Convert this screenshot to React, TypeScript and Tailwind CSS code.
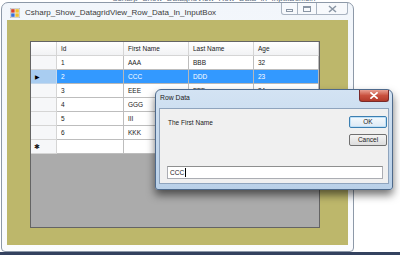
import React from "react";

const cols = [
    { name: "Id", w: 67 },
    { name: "First Name", w: 65 },
    { name: "Last Name", w: 65 },
    { name: "Age", w: 65 },
];

// last name / age of rows 4-6 sit under the dialog, left blank
const rows = [
    ["1", "AAA", "BBB", "32"],
    ["2", "CCC", "DDD", "23"],
    ["3", "EEE", "FFF", "34"],
    ["4", "GGG", "", ""],
    ["5", "III", "", ""],
    ["6", "KKK", "", ""],
];

const AppIcon = () => (
    <svg width="10" height="10" viewBox="0 0 10 10">
        <rect x="0" y="0" width="10" height="10" fill="#e8e8e8" stroke="#9a9a9a" strokeWidth="0.6" />
        <rect x="1.2" y="1.2" width="3.4" height="3.4" fill="#d9412b" />
        <rect x="5.4" y="1.2" width="3.4" height="3.4" fill="#f2c029" />
        <rect x="1.2" y="5.4" width="3.4" height="3.4" fill="#3a6fd8" />
        <rect x="5.4" y="5.4" width="3.4" height="3.4" fill="#f2c029" />
    </svg>
);

const DataGrid = () => {
    return (
        <div className="w-[290px] h-[187px] border border-[#646464] bg-[#ababab] flex flex-col text-[6.5px] text-[#1a1a1a]">
            {/* header row */}
            <div className="flex h-[14px] bg-gradient-to-b from-[#ffffff] to-[#f1f2f4] border-b border-[#d5d5d5]">
                <div className="w-[26px] border-r border-[#d5d5d5]" />
                {cols.map((c) => (
                    <div
                        key={c.name}
                        style={{ width: c.w }}
                        className="border-r border-[#d5d5d5] pl-[4px] flex items-center"
                    >
                        {c.name}
                    </div>
                ))}
            </div>

            {rows.map((r, i) => {
                const sel = i === 1;
                return (
                    <div key={r[0]} className="flex h-[14px]">
                        <div
                            className={
                                sel
                                    ? "w-[26px] bg-[#a9cdf1] border-r border-b border-[#c5d8ec] flex items-center pl-[4px]"
                                    : "w-[26px] bg-[#f6f7f9] border-r border-b border-[#d5d5d5]"
                            }
                        >
                            {sel && <span className="text-[6px] leading-none text-black">▶</span>}
                        </div>
                        {r.map((v, j) => (
                            <div
                                key={j}
                                style={{ width: cols[j].w }}
                                className={
                                    sel
                                        ? "bg-[#3399ff] text-white border-r border-b border-[#b8b8b8] pl-[4px] flex items-center"
                                        : "bg-white border-r border-b border-[#bdbdbd] pl-[4px] flex items-center"
                                }
                            >
                                {v}
                            </div>
                        ))}
                    </div>
                );
            })}

            {/* new row */}
            <div className="flex h-[14px]">
                <div className="w-[26px] bg-[#f6f7f9] border-r border-b border-[#d5d5d5] flex items-center pl-[3px]">
                    <span className="text-[7px] leading-none">✱</span>
                </div>
                {cols.map((c) => (
                    <div key={c.name} style={{ width: c.w }} className="bg-white border-r border-b border-[#bdbdbd]" />
                ))}
            </div>
        </div>
    );
};

const RowDataDialog = () => {
    return (
        <div className="absolute left-[155px] top-[89px] w-[238px] h-[101px] rounded-t-[6px] rounded-b-[3px] border border-[#4e6a8c] bg-gradient-to-b from-[#d3e3f3] to-[#b9d0e8] shadow-[0_5px_9px_rgba(0,0,0,0.55)] flex flex-col">
            <div className="h-[18px] flex items-start">
                <span className="pl-[4px] pt-[5px] text-[6.8px] leading-none text-[#1b1b1b]">Row Data</span>
                <div className="ml-auto mr-[3px] w-[30px] h-[12px] rounded-b-[3px] border border-[#7a2a2a] border-t-0 bg-gradient-to-b from-[#e8a093] via-[#c9513f] to-[#b23a2a] flex items-center justify-center">
                    <svg width="8" height="7" viewBox="0 0 8 7">
                        <path d="M1 0.8 L7 6.2 M7 0.8 L1 6.2" stroke="#ffffff" strokeWidth="1.8" strokeLinecap="round" />
                    </svg>
                </div>
            </div>
            <div className="mx-[3px] h-[76px] bg-[#f0f0f0] border border-[#8fa4bd] flex flex-col">
                <div className="flex pt-[7px]">
                    <span className="pl-[8px] pt-[4px] text-[6.5px] leading-none text-[#1a1a1a]">The First Name</span>
                    <div className="ml-auto mr-[1px] flex flex-col gap-[6px]">
                        <div className="w-[38px] h-[12px] rounded-[2px] border border-[#3c7fb1] bg-gradient-to-b from-[#f6fafd] to-[#dce9f5] shadow-[inset_0_0_0_1px_#bfe0f7] flex items-center justify-center text-[6.5px] text-[#1a1a1a]">
                            OK
                        </div>
                        <div className="w-[38px] h-[12px] rounded-[2px] border border-[#707070] bg-gradient-to-b from-[#f4f4f4] to-[#dddddd] flex items-center justify-center text-[6.5px] text-[#1a1a1a]">
                            Cancel
                        </div>
                    </div>
                </div>
                <div className="mt-auto mb-[4px] ml-[7px] mr-[5px] h-[13px] bg-white border border-[#abadb3] border-t-[#8e8f8f] flex items-center pl-[2px] text-[6.5px] text-[#1a1a1a]">
                    CCC<span className="w-[1px] h-[9px] bg-black ml-[1px]" />
                </div>
            </div>
        </div>
    );
};

const App = () => {
    return (
        <div className="relative w-[400px] h-[255px] overflow-hidden bg-white font-['Liberation_Sans',Arial,sans-serif]">
            {/* window behind, just peeking out at the top */}
            <div className="absolute left-[112px] top-[-5px] text-[8px] leading-[8px] text-[#5b6b80] whitespace-nowrap">
                Csharp_Show_DatagridView_Row_Data_In_InputBox.sln
            </div>

            {/* main form */}
            <div className="absolute left-[1px] top-[2px] w-[353px] h-[250px] rounded-t-[7px] rounded-b-[4px] border border-[#8d99a8] bg-gradient-to-b from-[#f2f6fb] to-[#fbfcfe] flex flex-col">
                <div className="h-[17px] flex items-center">
                    <div className="ml-[8px] mt-[2px]">
                        <AppIcon />
                    </div>
                    <span className="ml-[5px] mt-[2px] text-[8px] leading-none text-[#3a3a3a]">
                        Csharp_Show_DatagridView_Row_Data_In_InputBox
                    </span>
                    <div className="ml-auto mr-[5px] self-start flex h-[12px] rounded-b-[3px] border border-t-0 border-[#a9b3c0] bg-[#f7f9fc]">
                        <div className="w-[16px] border-r border-[#a9b3c0] flex items-center justify-center">
                            <div className="w-[7px] h-[3px] border border-[#8a96a5] mt-[3px]" />
                        </div>
                        <div className="w-[19px] border-r border-[#a9b3c0] flex items-center justify-center">
                            <div className="w-[8px] h-[6px] border border-[#8a96a5] border-t-2" />
                        </div>
                        <div className="w-[30px] flex items-center justify-center">
                            <svg width="9" height="8" viewBox="0 0 9 8">
                                <path d="M1 1 L8 7 M8 1 L1 7" stroke="#8a96a5" strokeWidth="1.6" />
                            </svg>
                        </div>
                    </div>
                </div>
                <div className="mx-[5px] h-[225px] bg-[#bdb76b] pl-[23px] pt-[21px]">
                    <DataGrid />
                </div>
            </div>

            <RowDataDialog />

            {/* taskbar edge */}
            <div className="absolute left-0 right-0 bottom-0 h-[3px] bg-[#34425f]" />
        </div>
    );
};

export default App;
